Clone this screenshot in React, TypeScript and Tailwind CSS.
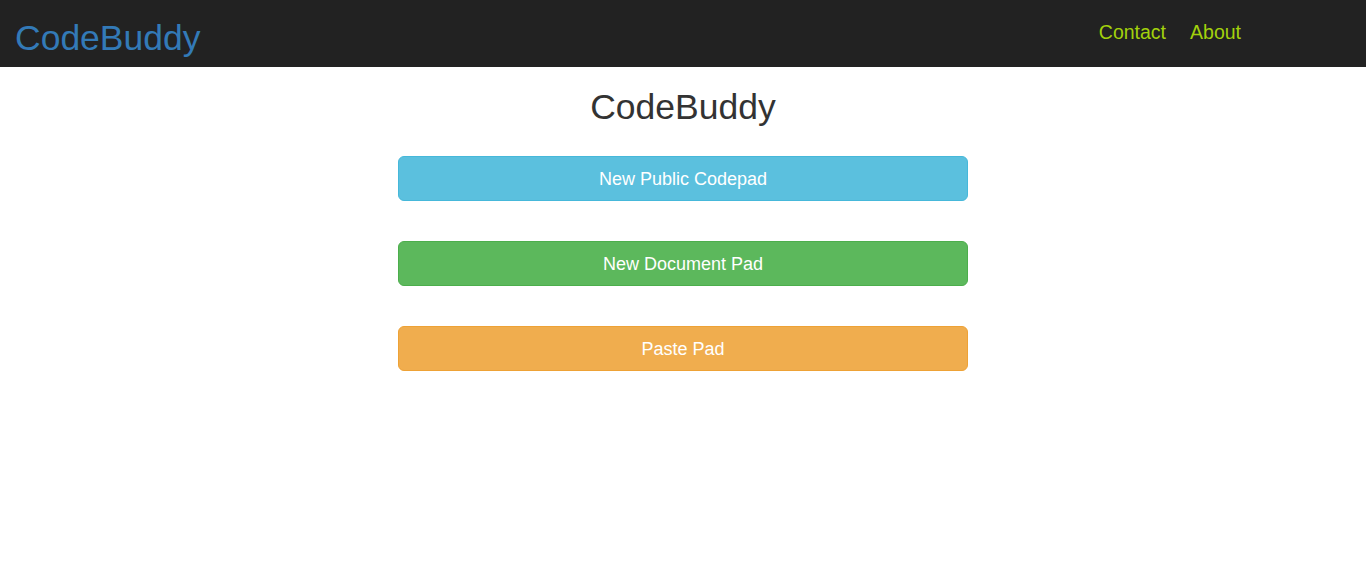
export default function App() {
  const buttons = [
    { label: "New Public Codepad", cls: "bg-[#5bc0de] border-[#46b8da]" },
    { label: "New Document Pad", cls: "bg-[#5cb85c] border-[#4cae4c]" },
    { label: "Paste Pad", cls: "bg-[#f0ad4e] border-[#eea236]" },
  ];

  return (
    <div className="min-h-[564px] bg-white font-['Liberation_Sans',Arial,sans-serif]">
      {/* Navbar */}
      <nav className="flex h-[67px] items-start justify-between bg-[#222222]">
        <a className="pl-[15px] pt-[18px] text-[35.5px] leading-[40px] text-[#337ab7]">
          CodeBuddy
        </a>
        <ul className="mr-[113px] flex pt-[20px]">
          <li className="px-3 text-[19.5px] leading-[24px] text-[#a3d10c]">Contact</li>
          <li className="px-3 text-[19.5px] leading-[24px] text-[#a3d10c]">About</li>
        </ul>
      </nav>

      {/* Main */}
      <div className="mx-auto w-[570px]">
        <h1 className="mt-[20px] text-center text-[35.5px] leading-[40px] text-[#333333]">
          CodeBuddy
        </h1>
        <div className="mt-[29px] flex flex-col gap-[40px]">
          {buttons.map((b) => (
            <button
              key={b.label}
              type="button"
              className={`h-[45px] w-full rounded-[6px] border pt-[2px] text-[18px] text-white ${b.cls}`}
            >
              {b.label}
            </button>
          ))}
        </div>
      </div>
    </div>
  );
}
